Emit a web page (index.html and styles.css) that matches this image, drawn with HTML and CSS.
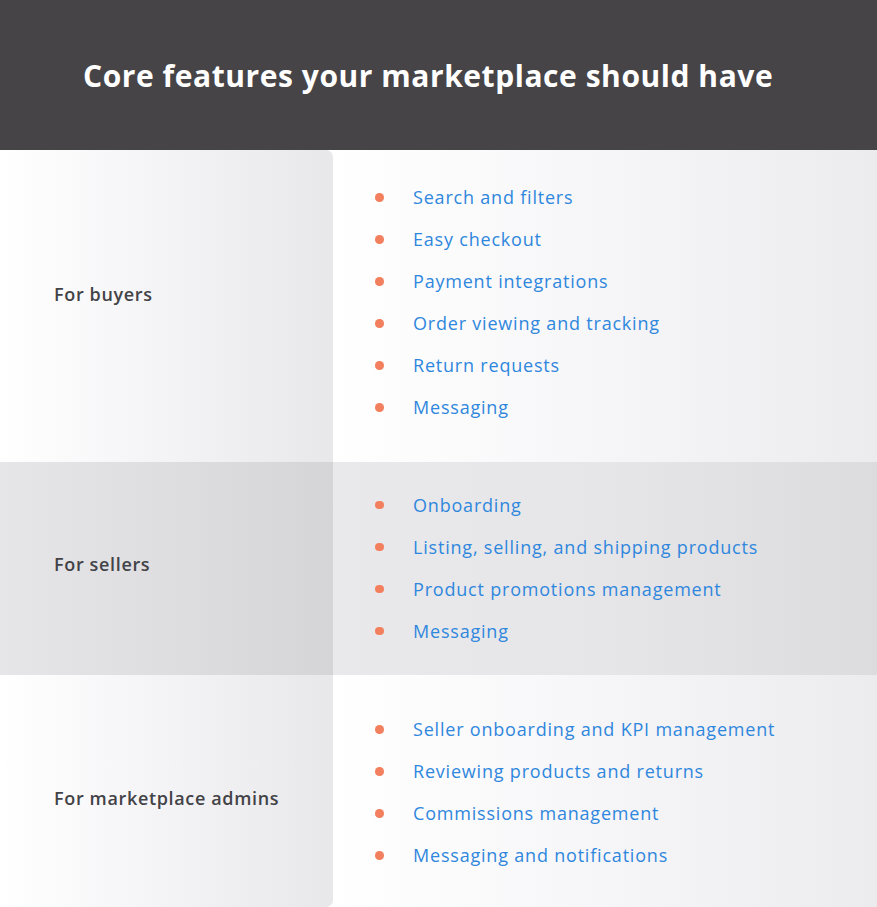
FILE: index.html
```html
<!DOCTYPE html>
<html>
<head>
<meta charset="utf-8">
<link rel="stylesheet" href="styles.css">
</head>
<body>
<div class="page">
  <header class="head"><h1 class="title">Core features your marketplace should have</h1></header>
  <div class="table">
    <div class="row row-light row-first">
      <div class="label">For buyers</div>
      <ul class="items">
        <li>Search and filters</li>
        <li>Easy checkout</li>
        <li>Payment integrations</li>
        <li>Order viewing and tracking</li>
        <li>Return requests</li>
        <li>Messaging</li>
      </ul>
    </div>
    <div class="row row-dark">
      <div class="label">For sellers</div>
      <ul class="items">
        <li>Onboarding</li>
        <li>Listing, selling, and shipping products</li>
        <li>Product promotions management</li>
        <li>Messaging</li>
      </ul>
    </div>
    <div class="row row-light row-last">
      <div class="label">For marketplace admins</div>
      <ul class="items">
        <li>Seller onboarding and KPI management</li>
        <li>Reviewing products and returns</li>
        <li>Commissions management</li>
        <li>Messaging and notifications</li>
      </ul>
    </div>
  </div>
</div>
</body>
</html>
```
FILE: styles.css
```css
* { box-sizing: border-box; }
html, body { margin: 0; padding: 0; background: #fff; }
body { font-family: "Open Sans", sans-serif; }
.page { width: 877px; height: 907px; overflow: hidden; }
.head {
  height: 150px;
  background: #464447;
  display: flex;
  align-items: center;
  padding-left: 83px;
}
.title {
  margin: 0;
  color: #fff;
  font-size: 30px;
  font-weight: 700;
  letter-spacing: 0.55px;
  white-space: nowrap;
}
.table { display: flex; flex-direction: column; }
.row { display: grid; grid-template-columns: 333px 1fr; }
.row-first { height: 312px; }
.row-dark { height: 213px; }
.row-last { height: 232px; }
.label {
  display: flex;
  align-items: center;
  padding-left: 54px;
  font-size: 18px;
  font-weight: 600;
  letter-spacing: 0.65px;
  color: #434347;
}
.row-first .label { padding-bottom: 24px; }
.row-dark .label { padding-bottom: 10px; }
.row-last .label { padding-top: 14px; }
.row-light .label { background: linear-gradient(90deg, #ffffff 0%, #f6f6f8 40%, #e8e8eb 100%); }
.row-light .items { background: linear-gradient(90deg, #ffffff 0%, #f6f6f8 50%, #ececef 100%); }
.row-dark .label { background: linear-gradient(90deg, #e6e6e9 0%, #dedee1 50%, #d5d5d8 100%); }
.row-dark .items { background: linear-gradient(90deg, #e9e9ec 0%, #e6e6e9 50%, #dcdcdf 100%); }
.row-first .label { border-top-right-radius: 7px; }
.row-last .label { border-bottom-right-radius: 7px; }
.items {
  list-style: none;
  margin: 0;
  padding: 0 0 0 80px;
  display: flex;
  flex-direction: column;
  justify-content: center;
}
.row-first .items { padding-bottom: 8px; }
.row-dark .items { padding-bottom: 2px; }
.row-last .items { padding-top: 2px; }
.items li {
  position: relative;
  height: 42px;
  line-height: 42px;
  font-size: 18px;
  font-weight: 500;
  letter-spacing: 0.8px;
  color: #2f87dd;
}
.items li::before {
  content: "";
  position: absolute;
  left: -38px;
  top: 17px;
  width: 8.5px;
  height: 8.5px;
  border-radius: 50%;
  background: #f2805f;
}
```
